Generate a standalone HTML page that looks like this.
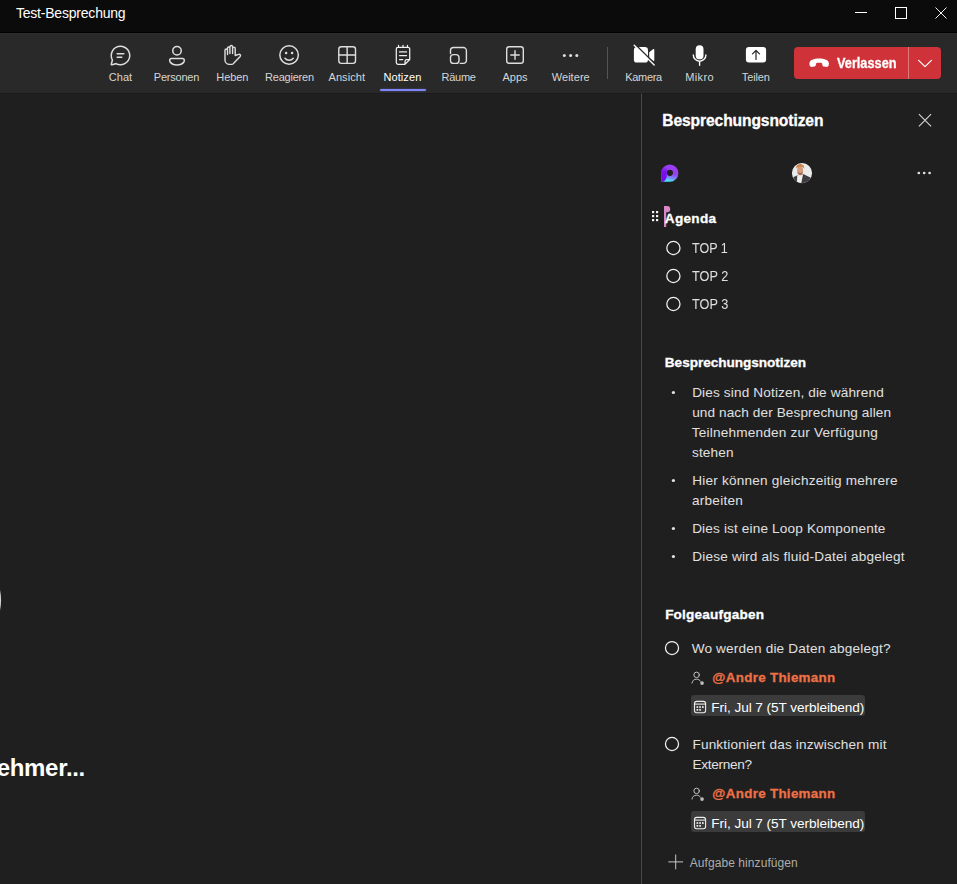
<!DOCTYPE html>
<html lang="de">
<head>
<meta charset="utf-8">
<title>Test-Besprechung</title>
<style>
*{box-sizing:border-box;margin:0;padding:0}
html,body{width:957px;height:884px;overflow:hidden;background:#1f1f1f;font-family:"Liberation Sans",sans-serif;color:#fff}
#titlebar{position:absolute;left:0;top:0;width:957px;height:33px;background:#0b0b0b;border-bottom:1px solid #000}
#toolbar{position:absolute;left:0;top:33px;width:957px;height:60px;background:#292929;border-top:1px solid #2d2d2d}
#main{position:absolute;left:0;top:93px;width:641px;height:791px;background:#1f1f1f;border-top:1px solid #1b1b1b;overflow:hidden}
#panel{position:absolute;left:641px;top:93px;width:316px;height:791px;background:#1f1f1f;border-left:1px solid #484848;border-top:1px solid #1b1b1b}
#leave{position:absolute;left:794px;top:47px;width:147px;height:32px;background:#cf3339;border-radius:4px}
#leavediv{position:absolute;left:908px;top:47px;width:1px;height:32px;background:#e0787c}
#underline{position:absolute;left:380px;top:89px;width:46px;height:2px;border-radius:1px;background:#7f85f5;box-shadow:0 0 2px rgba(127,133,245,.45)}
#sep{position:absolute;left:607px;top:47px;width:1px;height:32px;background:#555}
.chip{position:absolute;left:691px;width:174px;height:21px;background:#3b3b3b;border-radius:3px}
.t{position:absolute;white-space:nowrap;line-height:20px;margin:0;font-style:normal}
ul{list-style:none}
svg{position:absolute;left:0;top:0;overflow:visible}
#wait{position:absolute;right:556px;top:657.8px;font-size:24px;line-height:32px;font-weight:bold;color:#fff;white-space:nowrap;letter-spacing:-0.3px}
#t_title{left:15.95px;top:3.00px;font-size:14px;font-weight:normal;color:#ffffff;letter-spacing:-0.209px}
#l_chat{left:108.76px;top:67.00px;font-size:11px;font-weight:normal;color:#d6d6d6;letter-spacing:0.038px}
#l_pers{left:153.86px;top:67.00px;font-size:11px;font-weight:normal;color:#d6d6d6;letter-spacing:-0.237px}
#l_heben{left:216.26px;top:67.00px;font-size:11px;font-weight:normal;color:#d6d6d6;letter-spacing:-0.064px}
#l_reag{left:265.06px;top:67.00px;font-size:11px;font-weight:normal;color:#d6d6d6;letter-spacing:-0.218px}
#l_ans{left:328.46px;top:67.00px;font-size:11px;font-weight:normal;color:#d6d6d6;letter-spacing:0.089px}
#l_not{left:383.46px;top:67.00px;font-size:11px;font-weight:normal;color:#ffffff;letter-spacing:0.086px}
#l_raum{left:441.46px;top:67.00px;font-size:11px;font-weight:normal;color:#d6d6d6;letter-spacing:-0.234px}
#l_apps{left:502.56px;top:67.00px;font-size:11px;font-weight:normal;color:#d6d6d6;letter-spacing:-0.020px}
#l_weit{left:551.76px;top:67.00px;font-size:11px;font-weight:normal;color:#d6d6d6;letter-spacing:0.042px}
#l_kam{left:625.26px;top:67.00px;font-size:11px;font-weight:normal;color:#d6d6d6;letter-spacing:-0.305px}
#l_mik{left:685.16px;top:67.00px;font-size:11px;font-weight:normal;color:#d6d6d6;letter-spacing:0.422px}
#l_teil{left:741.86px;top:67.00px;font-size:11px;font-weight:normal;color:#d6d6d6;letter-spacing:-0.125px}
#l_leave{left:836.95px;top:53.00px;font-size:14px;font-weight:bold;color:#ffffff;-webkit-text-stroke:0.3px;transform:scaleX(0.9099);transform-origin:0 0}
#p_head{left:662.25px;top:111.00px;font-size:15.6px;font-weight:bold;color:#ffffff;-webkit-text-stroke:0.3px;letter-spacing:-0.094px}
#h_agenda{left:664.85px;top:209.00px;font-size:13.6px;font-weight:bold;color:#ffffff;-webkit-text-stroke:0.3px;letter-spacing:0.273px}
#a_top1{left:691.95px;top:238.00px;font-size:14px;font-weight:normal;color:#e0e0e0;transform:scaleX(0.8961);transform-origin:0 0}
#a_top2{left:691.95px;top:266.00px;font-size:14px;font-weight:normal;color:#e0e0e0;transform:scaleX(0.9086);transform-origin:0 0}
#a_top3{left:691.95px;top:294.00px;font-size:14px;font-weight:normal;color:#e0e0e0;transform:scaleX(0.9086);transform-origin:0 0}
#h_notes{left:664.85px;top:353.00px;font-size:13.6px;font-weight:bold;color:#ffffff;-webkit-text-stroke:0.3px;letter-spacing:-0.042px}
#n_1a{left:692.15px;top:383.00px;font-size:13.6px;font-weight:normal;color:#e0e0e0;letter-spacing:0.146px}
#n_1b{left:692.15px;top:403.00px;font-size:13.6px;font-weight:normal;color:#e0e0e0;letter-spacing:0.108px}
#n_1c{left:691.65px;top:423.00px;font-size:13.6px;font-weight:normal;color:#e0e0e0;letter-spacing:0.210px}
#n_1d{left:691.95px;top:443.00px;font-size:13.6px;font-weight:normal;color:#e0e0e0;letter-spacing:0.179px}
#n_2a{left:692.15px;top:471.00px;font-size:13.6px;font-weight:normal;color:#e0e0e0;letter-spacing:0.218px}
#n_2b{left:691.95px;top:491.00px;font-size:13.6px;font-weight:normal;color:#e0e0e0;letter-spacing:0.259px}
#n_3{left:692.15px;top:519.00px;font-size:13.6px;font-weight:normal;color:#e0e0e0;letter-spacing:0.154px}
#n_4{left:692.15px;top:547.00px;font-size:13.6px;font-weight:normal;color:#e0e0e0;letter-spacing:0.202px}
#h_follow{left:665.15px;top:605.00px;font-size:13.6px;font-weight:bold;color:#ffffff;-webkit-text-stroke:0.3px;letter-spacing:0.179px}
#f_1{left:691.65px;top:639.00px;font-size:13.6px;font-weight:normal;color:#e0e0e0;letter-spacing:0.173px}
#f_1m{left:712.35px;top:668.00px;font-size:13.4px;font-weight:bold;color:#ed7145;-webkit-text-stroke:0.3px;letter-spacing:0.299px}
#f_1d{left:711.35px;top:698.00px;font-size:13.6px;font-weight:normal;color:#ffffff;letter-spacing:-0.061px}
#f_2a{left:692.45px;top:735.00px;font-size:13.6px;font-weight:normal;color:#e0e0e0;letter-spacing:0.171px}
#f_2b{left:692.45px;top:755.00px;font-size:13.6px;font-weight:normal;color:#e0e0e0;letter-spacing:-0.285px}
#f_2m{left:712.35px;top:784.00px;font-size:13.4px;font-weight:bold;color:#ed7145;-webkit-text-stroke:0.3px;letter-spacing:0.299px}
#f_2d{left:711.35px;top:814.00px;font-size:13.6px;font-weight:normal;color:#ffffff;letter-spacing:-0.061px}
#f_add{left:689.76px;top:853.00px;font-size:12px;font-weight:normal;color:#adadad;letter-spacing:0.069px}
</style>
</head>
<body>
<div id="titlebar"></div>
<div id="toolbar"></div>
<div id="main"><div id="wait">Teilnehmer...</div></div>
<div id="panel"></div>
<div id="leave"></div><div id="leavediv"></div>
<div id="underline"></div><div id="sep"></div>
<div class="chip" style="top:695px"></div>
<div class="chip" style="top:811px"></div>

<svg width="957" height="884" viewBox="0 0 957 884" style="pointer-events:none">
<defs>
<linearGradient id="lg1" x1="0.550" y1="0" x2="0.300" y2="1"><stop offset="0" stop-color="#9b3cf3"/><stop offset="0.480" stop-color="#9641ee"/><stop offset="0.720" stop-color="#7b86f5"/><stop offset="0.900" stop-color="#52dcf8"/><stop offset="1" stop-color="#48eaf6"/></linearGradient>
<clipPath id="avc"><circle cx="802" cy="173.1" r="10.1"/></clipPath>
<filter id="avb" x="-20%" y="-20%" width="140%" height="140%"><feGaussianBlur stdDeviation="0.450"/></filter>
<linearGradient id="lg2" x1="0" y1="0" x2="0" y2="1"><stop offset="0" stop-color="#8a22f0" stop-opacity="0"/><stop offset="0.350" stop-color="#7a10ee" stop-opacity="1"/><stop offset="1" stop-color="#7208f0"/></linearGradient>
</defs>
<!-- window controls -->
<g stroke="#ffffff" stroke-width="1" fill="none">
<path d="M855 12.5H867"/>
<rect x="895.5" y="7.5" width="11" height="11"/>
<path d="M935.5 7.5L946.5 18.5M946.5 7.5L935.5 18.5" stroke-width="0.95"/>
</g>
<!-- toolbar icons -->
<g fill="#dedede">
<g transform="translate(108.5 43.5)"><path d="M12 2a10 10 0 1 1-4.59 18.89L3.6 21.96a1.25 1.25 0 0 1-1.54-1.54l1.06-3.83A10 10 0 0 1 12 2Zm0 1.5a8.5 8.5 0 0 0-7.43 12.64l.15.27-1.1 3.98 3.98-1.1.27.15A8.5 8.5 0 1 0 12 3.5ZM8.75 13h4.5a.75.75 0 0 1 .1 1.5h-4.6a.75.75 0 0 1-.1-1.5h4.6-4.5Zm0-3.5h6.5a.75.75 0 0 1 .1 1.5h-6.6a.75.75 0 0 1-.1-1.5h6.6-6.5Z"/></g>
<g transform="translate(165 43.7)"><path d="M17.75 14C19 14 20 15 20 16.25v.92c0 .57-.18 1.13-.51 1.6C17.94 20.93 15.42 22 12 22s-5.94-1.07-7.49-3.24a2.75 2.75 0 0 1-.51-1.6v-.92C4 15 5 14 6.25 14h11.5Zm0 1.500H6.25a.75.75 0 0 0-.75.75v.92c0 .26.08.51.23.73C6.95 19.6 9 20.5 12 20.5s5.050-.9 6.270-2.600c.15-.22.23-.47.23-.73v-.92a.75.75 0 0 0-.75-.75ZM12 2a5 5 0 1 1 0 10 5 5 0 0 1 0-10Zm0 1.500a3.500 3.500 0 1 0 0 7 3.500 3.500 0 0 0 0-7Z"/></g>
<g transform="translate(277.1 43)"><path d="M12 2a10 10 0 1 1 0 20 10 10 0 0 1 0-20Zm0 1.500a8.500 8.500 0 1 0 0 17 8.500 8.500 0 0 0 0-17ZM8.460 14.780a4.500 4.500 0 0 0 7.080 0 .75.75 0 1 1 1.180.93 6 6 0 0 1-9.440 0 .75.75 0 1 1 1.180-.93ZM9 8.750a1.250 1.250 0 1 1 0 2.500 1.250 1.250 0 0 1 0-2.500Zm6 0a1.250 1.250 0 1 1 0 2.500 1.250 1.250 0 0 1 0-2.500Z"/></g>
</g>
<g fill="none" stroke="#dedede" stroke-width="1.4" stroke-linecap="round" stroke-linejoin="round">
<!-- hand -->
<path d="M225 59.900V50.250a1.250 1.250 0 0 1 2.500 0V48.200a1.200 1.200 0 0 1 2.400 0V46.900a1.350 1.350 0 0 1 2.700 0V48.400a1.300 1.300 0 0 1 2.600 0V55.500L238.600 54.400a1.300 1.300 0 0 1 1.600 2L233.400 63.600a2.200 2.200 0 0 1-1.700.8H229.500A4.500 4.500 0 0 1 225 59.900ZM227.500 50.250V54.600M229.900 48.200V53.600M232.600 48.400V53.600"/>
<!-- grid -->
<rect x="338.800" y="46.700" width="16.700" height="16.700" rx="2.600"/><path d="M347.150 46.700V63.400M338.800 55.050H355.500"/>
<!-- notepad -->
<path d="M398 47.300H408a1.700 1.700 0 0 1 1.700 1.700V59.600L405 64.300H398a1.700 1.700 0 0 1-1.700-1.700V49a1.700 1.700 0 0 1 1.700-1.700ZM405 64.300V61.500a1.800 1.800 0 0 1 1.800-1.800H409.700M398.500 45.300V47M403 45.300V47M407.500 45.300V47M399.500 51.900H406.500M399.500 55.600H406.500M399.500 59.500H402.700" stroke="#f0f0f0" stroke-width="1.250"/>
<!-- rooms -->
<path d="M450.500 53.600V50.500a3 3 0 0 1 3-3H463.400a3 3 0 0 1 3 3V60.400a3 3 0 0 1-3 3H460.300"/><rect x="450.500" y="54.600" width="8.500" height="8.800" rx="3"/>
<!-- apps -->
<rect x="506.700" y="46.700" width="16.600" height="16.600" rx="2.600"/><path d="M515 50.800V59.200M510.800 55H519.200"/>
<!-- mic arc -->
<path d="M693.300 54.900a6.300 6.300 0 0 0 12.600 0M699.600 61.200V65.200" stroke="#ffffff"/>
</g>
<!-- more dots -->
<g fill="#dedede"><circle cx="564.300" cy="55.600" r="1.500"/><circle cx="570.600" cy="55.600" r="1.500"/><circle cx="576.800" cy="55.600" r="1.500"/></g>
<!-- camera off -->
<g fill="#ffffff"><rect x="633.900" y="47" width="14.100" height="15.600" rx="3.200"/><path d="M649.200 52.200L653 49.200a.8.800 0 0 1 1.300.6V60.200a.8.800 0 0 1-1.300.6L649.200 57.800Z"/></g>
<path d="M635 44.300L655 64.100" stroke="#292929" stroke-width="1.600" fill="none"/>
<path d="M634.200 45.200L654.200 65" stroke="#ffffff" stroke-width="1.300" stroke-linecap="round" fill="none"/>
<!-- mic capsule -->
<rect x="695.700" y="45.300" width="7.800" height="14" rx="3.900" fill="#ffffff"/>
<!-- share -->
<rect x="745.900" y="47.100" width="20.200" height="15.500" rx="3" fill="#ffffff"/>
<path d="M756 59.400V50.600M752.500 53.900L756 50.500L759.500 53.900" stroke="#292929" stroke-width="1.200" fill="none" stroke-linecap="round" stroke-linejoin="round"/>
<!-- leave -->
<path d="M809.400 63.600C809.400 60 814 58.600 819.100 58.600C824.300 58.600 828.900 60 828.900 63.600C828.900 65.600 828.300 66.900 826.800 66.900L824.200 66.600C823 66.500 822.500 65.800 822.300 64.700L822 63.200C821 62.600 817.200 62.600 816.200 63.200L815.900 64.700C815.700 65.800 815.200 66.500 814 66.600L811.500 66.900C810 66.900 809.400 65.600 809.400 63.600Z" fill="#ffffff"/>
<path d="M918.600 60.300L925 66.700L931.400 60.300" stroke="#ffffff" stroke-width="1.200" fill="none" stroke-linecap="round" stroke-linejoin="round"/>
<!-- panel close -->
<path d="M918.900 114.100L931.100 126.300M931.100 114.100L918.900 126.300" stroke="#d6d6d6" stroke-width="1.100" fill="none"/>
<!-- panel more -->
<g fill="#e0e0e0"><circle cx="918.800" cy="173" r="1.350"/><circle cx="924.200" cy="173" r="1.350"/><circle cx="929.600" cy="173" r="1.350"/></g>
<!-- loop logo -->
<path d="M661.200 173.200a8.600 8.600 0 1 1 8.600 8.600H662.400a1.200 1.200 0 0 1-1.200-1.200ZM669.900 169.700a3.100 3.100 0 1 0 0 6.200a3.100 3.100 0 0 0 0-6.200Z" fill="url(#lg1)" fill-rule="evenodd"/>
<path d="M661.200 173.200a8.600 8.600 0 0 1 4.300-7.450L667.600 169.500a4 4 0 0 0-.9 3.300C667.200 177 666.300 179.600 663.800 181.500a1.600 1.600 0 0 1-2.600-1.100Z" fill="url(#lg2)"/>
<!-- avatar -->
<g clip-path="url(#avc)">
<rect x="791" y="162" width="22" height="22" fill="#ebebeb"/>
<g filter="url(#avb)">
<path d="M792 185L793.600 177L796.500 175.800L799.200 174.600L803.700 174.200L810.800 177.800L813 185Z" fill="#3f3d42"/>
<path d="M797.200 175.700L799 174.500L803 174.600L802.300 178L801.200 183.500L797 183.500Z" fill="#f1efee"/>
<ellipse cx="800.100" cy="170.300" rx="3" ry="4.100" fill="#d39c7c"/>
<path d="M797.300 171.800Q797.800 175.200 800.300 175.300Q802.600 175.100 803 171.800Q800.300 174 797.300 171.800Z" fill="#a8694c"/>
<path d="M796.200 168.600Q795.700 164.200 800.300 163.900Q804.500 164.100 804.300 168.800Q803.400 166.400 800.600 166.700Q797.800 166.300 796.200 168.600Z" fill="#c98445"/>
</g>
</g>
<!-- drag handle -->
<g fill="#f4f4f4"><rect x="652" y="211" width="2.200" height="2.200"/><rect x="656" y="211" width="2.200" height="2.200"/><rect x="652" y="215" width="2.200" height="2.200"/><rect x="656" y="215" width="2.200" height="2.200"/><rect x="652" y="219" width="2.200" height="2.200"/><rect x="656" y="219" width="2.200" height="2.200"/></g>
<!-- cursor flag -->
<path d="M664 206H667.200a3 3 0 0 1 3 3V209.200a3 3 0 0 1-3 3H666.200V226.900H664Z" fill="#d888c4"/>
<!-- agenda circles -->
<g fill="none" stroke="#f2f2f2" stroke-width="1.250"><circle cx="673.400" cy="248" r="6.600"/><circle cx="673.400" cy="276" r="6.600"/><circle cx="673.400" cy="304" r="6.600"/><circle cx="672" cy="648.050" r="6.550"/><circle cx="672" cy="744" r="6.550"/></g>
<!-- bullets -->
<g fill="#e4e4e4"><circle cx="673.400" cy="392.500" r="1.600"/><circle cx="673.400" cy="480.500" r="1.600"/><circle cx="673.400" cy="528.500" r="1.600"/><circle cx="673.400" cy="556.500" r="1.600"/></g>
<!-- person assign icons -->
<g id="pa" fill="none" stroke="#c6c6c6" stroke-width="0.950" stroke-linecap="round"><circle cx="696.600" cy="674.900" r="2.750"/><path d="M692 683.100C692.300 680.600 694 679.200 696.600 679.200C698.300 679.200 699.600 679.900 700.500 681.200"/><circle cx="702.050" cy="683.100" r="1.850" fill="#bdbdbd" stroke="none"/></g>
<use href="#pa" y="116"/>
<!-- calendar icons -->
<g id="cal"><rect x="694.500" y="701.400" width="11.100" height="11.300" rx="2.200" fill="none" stroke="#ededed" stroke-width="1.100"/><path d="M694.500 704.100H705.600" stroke="#ededed" stroke-width="1.100"/><g fill="#ededed"><rect x="696.500" y="706.200" width="1.700" height="1.700"/><rect x="699.200" y="706.200" width="1.700" height="1.700"/><rect x="702" y="706.200" width="1.700" height="1.700"/><rect x="696.500" y="709" width="1.700" height="1.700"/><rect x="699.200" y="709" width="1.700" height="1.700"/></g></g>
<use href="#cal" y="116"/>
<!-- plus -->
<path d="M675.700 854.500V869.300M668.300 861.900H683.100" stroke="#c8c8c8" stroke-width="1" fill="none"/>
<!-- main avatar sliver -->
<circle cx="-47.400" cy="600.300" r="48.500" fill="#d4d4d4"/>
</svg>


<div class="t" id="t_title">Test-Besprechung</div>
<nav>
<span class="t" id="l_chat">Chat</span>
<span class="t" id="l_pers">Personen</span>
<span class="t" id="l_heben">Heben</span>
<span class="t" id="l_reag">Reagieren</span>
<span class="t" id="l_ans">Ansicht</span>
<span class="t" id="l_not">Notizen</span>
<span class="t" id="l_raum">Räume</span>
<span class="t" id="l_apps">Apps</span>
<span class="t" id="l_weit">Weitere</span>
<span class="t" id="l_kam">Kamera</span>
<span class="t" id="l_mik">Mikro</span>
<span class="t" id="l_teil">Teilen</span>
<span class="t" id="l_leave">Verlassen</span>
</nav>
<aside>
<h2 class="t" id="p_head">Besprechungsnotizen</h2>
<h3 class="t" id="h_agenda">Agenda</h3>
<ul>
<li class="t" id="a_top1">TOP 1</li>
<li class="t" id="a_top2">TOP 2</li>
<li class="t" id="a_top3">TOP 3</li>
</ul>
<h3 class="t" id="h_notes">Besprechungsnotizen</h3>
<ul>
<li><span class="t" id="n_1a">Dies sind Notizen, die während</span> <span class="t" id="n_1b">und nach der Besprechung allen</span> <span class="t" id="n_1c">Teilnehmenden zur Verfügung</span> <span class="t" id="n_1d">stehen</span></li>
<li><span class="t" id="n_2a">Hier können gleichzeitig mehrere</span> <span class="t" id="n_2b">arbeiten</span></li>
<li><span class="t" id="n_3">Dies ist eine Loop Komponente</span></li>
<li><span class="t" id="n_4">Diese wird als fluid-Datei abgelegt</span></li>
</ul>
<h3 class="t" id="h_follow">Folgeaufgaben</h3>
<ul>
<li><span class="t" id="f_1">Wo werden die Daten abgelegt?</span> <span class="t" id="f_1m">@Andre Thiemann</span> <span class="t" id="f_1d">Fri, Jul 7 (5T verbleibend)</span></li>
<li><span class="t" id="f_2a">Funktioniert das inzwischen mit</span> <span class="t" id="f_2b">Externen?</span> <span class="t" id="f_2m">@Andre Thiemann</span> <span class="t" id="f_2d">Fri, Jul 7 (5T verbleibend)</span></li>
</ul>
<span class="t" id="f_add">Aufgabe hinzufügen</span>
</aside>
</body>
</html>
